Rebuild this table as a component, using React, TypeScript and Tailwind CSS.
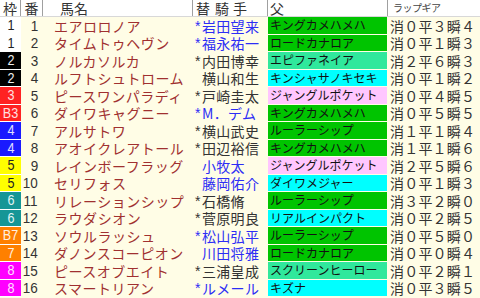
const frameStyle: Record<number, string> = {
  1: "bg-white text-[#222]",
  2: "bg-black text-[#eee]",
  3: "bg-[#ff2222] text-[#ffe0e0]",
  4: "bg-[#1a1aff] text-[#e0e0ff]",
  5: "bg-[#ffff00] text-[#222]",
  6: "bg-[#159696] text-[#e0f4f4]",
  7: "bg-[#ff8000] text-[#fff0e0]",
  8: "bg-[#ff00ff] text-[#ffe0ff]",
}

const sireStyle: Record<string, string> = {
  g: "bg-[#00c400]",
  m: "bg-[#30e89c]",
  c: "bg-[#00ffff]",
  p: "bg-[#ffc6ff]",
}

const horses = [
  { w: 1, f: "1", no: 1, name: "エアロロノア", mark: true, jockey: "岩田望来", blue: true, sire: "キングカメハメハ", sc: "g", lap: "消０平３瞬４" },
  { w: 1, f: "1", no: 2, name: "タイムトゥヘヴン", mark: true, jockey: "福永祐一", blue: true, sire: "ロードカナロア", sc: "g", lap: "消０平１瞬３" },
  { w: 2, f: "2", no: 3, name: "ノルカソルカ", mark: true, jockey: "内田博幸", blue: false, sire: "エピファネイア", sc: "m", lap: "消２平６瞬３" },
  { w: 2, f: "2", no: 4, name: "ルフトシュトローム", mark: false, jockey: "横山和生", blue: false, sire: "キンシャサノキセキ", sc: "c", lap: "消０平１瞬２" },
  { w: 3, f: "3", no: 5, name: "ピースワンパラディ", mark: true, jockey: "戸崎圭太", blue: false, sire: "ジャングルポケット", sc: "p", lap: "消０平４瞬５" },
  { w: 3, f: "B3", no: 6, name: "ダイワキャグニー", mark: true, jockey: "M．デム", blue: true, sire: "キングカメハメハ", sc: "g", lap: "消０平５瞬５" },
  { w: 4, f: "4", no: 7, name: "アルサトワ", mark: true, jockey: "横山武史", blue: false, sire: "ルーラーシップ", sc: "g", lap: "消１平１瞬４" },
  { w: 4, f: "4", no: 8, name: "アオイクレアトール", mark: true, jockey: "田辺裕信", blue: false, sire: "キングカメハメハ", sc: "g", lap: "消１平１瞬６" },
  { w: 5, f: "5", no: 9, name: "レインボーフラッグ", mark: false, jockey: "小牧太", blue: true, sire: "ジャングルポケット", sc: "p", lap: "消２平５瞬６" },
  { w: 5, f: "5", no: 10, name: "セリフォス", mark: false, jockey: "藤岡佑介", blue: true, sire: "ダイワメジャー", sc: "c", lap: "消０平１瞬３" },
  { w: 6, f: "6", no: 11, name: "リレーションシップ", mark: true, jockey: "石橋脩", blue: false, sire: "ルーラーシップ", sc: "g", lap: "消３平２瞬０" },
  { w: 6, f: "6", no: 12, name: "ラウダシオン", mark: true, jockey: "菅原明良", blue: false, sire: "リアルインパクト", sc: "c", lap: "消０平２瞬５" },
  { w: 7, f: "B7", no: 13, name: "ソウルラッシュ", mark: true, jockey: "松山弘平", blue: true, sire: "ルーラーシップ", sc: "g", lap: "消０平５瞬０" },
  { w: 7, f: "7", no: 14, name: "ダノンスコーピオン", mark: false, jockey: "川田将雅", blue: true, sire: "ロードカナロア", sc: "g", lap: "消０平０瞬４" },
  { w: 8, f: "8", no: 15, name: "ピースオブエイト", mark: true, jockey: "三浦皇成", blue: false, sire: "スクリーンヒーロー", sc: "m", lap: "消０平２瞬１" },
  { w: 8, f: "8", no: 16, name: "スマートリアン", mark: true, jockey: "ルメール", blue: true, sire: "キズナ", sc: "c", lap: "消０平３瞬５" },
]

const cols = "grid grid-cols-[21px_22px_150px_75px_120px_92px]"

export default function App() {
  return (
    <div className="w-[480px] h-[298px] overflow-hidden bg-[#fffde6] font-['Noto_Sans_CJK_JP',sans-serif]">
      {/* header */}
      <div className={`${cols} h-[17px] bg-white text-[#333] text-[14px] leading-[16px] border-b border-[#d8d8d8]`}>
        <div className="flex items-center justify-center border-r border-[#a0a0a0]">枠</div>
        <div className="flex items-center justify-center border-r border-[#a0a0a0]">番</div>
        <div className="flex items-center pl-[17px] border-r border-[#a0a0a0]">馬名</div>
        <div className="flex items-center pl-[3px] border-r border-[#a0a0a0]">
          <span>替</span>
          <span className="ml-[5px] tracking-[4px]">騎手</span>
        </div>
        <div className="flex items-center pl-[2px] border-r border-[#a0a0a0]">父</div>
        <div className="flex items-center pl-[5px] text-[10px] tracking-[-0.5px] text-[#444]">ラップギア</div>
      </div>

      {/* rows */}
      {horses.map((h) => (
        <div key={h.no} className={`${cols} h-[17.5px] leading-[16px]`}>
          <div className={`flex items-center justify-center border-b border-white text-[14px] font-['Liberation_Sans',sans-serif] ${frameStyle[h.w]}`}>
            <span className="scale-x-90">{h.f}</span>
          </div>
          <div className="flex items-center justify-end pr-[5px] text-[15px] text-[#333] font-['Liberation_Sans',sans-serif]">
            <span className="scale-x-90 origin-right">{h.no}</span>
          </div>
          <div className="flex items-center pl-[11px] text-[14px] tracking-[0.5px] text-[#a03030] overflow-hidden whitespace-nowrap">
            {h.name}
          </div>
          <div className={`flex items-center pl-[2px] text-[14px] tracking-[0.3px] whitespace-nowrap overflow-hidden ${h.blue ? "text-[#2d2df5]" : "text-[#333]"}`}>
            <span className="w-[7px] shrink-0 font-['Liberation_Sans',sans-serif]">{h.mark ? "*" : ""}</span>
            <span>{h.jockey}</span>
          </div>
          <div className={`flex items-center pl-[2px] mr-px border-b border-[#fffde6] text-[12px] text-[#111] whitespace-nowrap overflow-hidden ${sireStyle[h.sc]}`}>
            {h.sire}
          </div>
          <div className="flex items-center pl-[2px] text-[14px] tracking-[0.2px] text-[#333] whitespace-nowrap">
            {h.lap}
          </div>
        </div>
      ))}
    </div>
  )
}
